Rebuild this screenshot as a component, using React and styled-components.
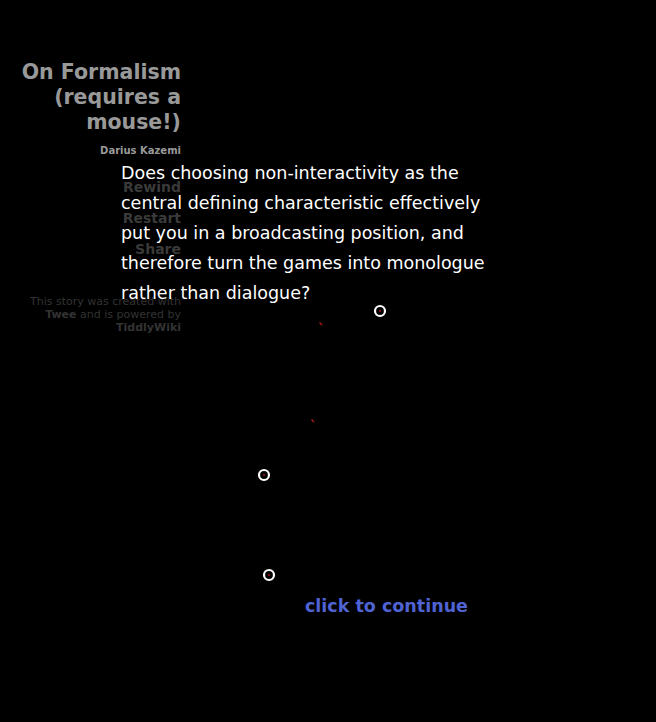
import React from "react";
import styled, { createGlobalStyle } from "styled-components";

const Global = createGlobalStyle`
  html, body { margin: 0; padding: 0; background: #000; }
  body { font-family: "DejaVu Sans", Verdana, sans-serif; }
`;

const Page = styled.div`
  position: relative;
  width: 656px;
  height: 722px;
  background: #000;
  overflow: hidden;
  display: grid;
  grid-template-columns: 121px 60px 1fr;
  grid-template-rows: auto;
  align-items: start;
`;

const Sidebar = styled.aside`
  grid-column: 1 / 3;
  grid-row: 1;
  padding-top: 60px;
  display: flex;
  flex-direction: column;
  align-items: flex-end;
  text-align: right;
`;

const Title = styled.h1`
  margin: 0;
  font-size: 20.5px;
  line-height: 25px;
  font-weight: bold;
  color: #999;
  width: 170px;
`;

const Author = styled.div`
  margin-top: 9px;
  font-size: 10px;
  font-weight: bold;
  color: #999;
  line-height: 13px;
`;

const Menu = styled.ul`
  list-style: none;
  margin: 20px 0 0;
  padding: 0;
  display: flex;
  flex-direction: column;
  align-items: flex-end;
  gap: 11px;
`;

const MenuItem = styled.li`
  font-size: 14px;
  line-height: 20px;
  font-weight: bold;
  color: #3a3a3a;
`;

const Credits = styled.p`
  margin: 36px 0 0;
  font-size: 11px;
  line-height: 13px;
  color: #333;
  width: 170px;
  b { font-weight: bold; }
`;

const Passage = styled.main`
  grid-column: 2 / 4;
  grid-row: 1;
  margin-top: 158px;
  width: 380px;
  position: relative;
  z-index: 1;
`;

const Question = styled.p`
  margin: 0;
  font-size: 17.5px;
  line-height: 30px;
  color: #fff;
`;

const Canvas = styled.div`
  position: relative;
  height: 340px;
`;

const Ring = styled.svg`
  position: absolute;
  width: 14px;
  height: 14px;
`;

const Tick = styled.svg`
  position: absolute;
  width: 4px;
  height: 4px;
`;

const Continue = styled.a`
  position: absolute;
  left: 184px;
  top: 288px;
  font-size: 17.5px;
  font-weight: bold;
  color: #4f63d2;
  text-decoration: none;
  white-space: nowrap;
  cursor: pointer;
`;

const rings = [
  { x: 380, y: 311 },
  { x: 264, y: 475 },
  { x: 269, y: 575 },
];
const ticks = [
  { x: 321, y: 324 },
  { x: 313, y: 421 },
];

const originX = 121;
const originY = 308;

export default function App() {
  return (
    <>
      <Global />
      <Page>
        <Sidebar>
          <Title>On Formalism (requires a mouse!)</Title>
          <Author>Darius Kazemi</Author>
          <Menu>
            <MenuItem>Rewind</MenuItem>
            <MenuItem>Restart</MenuItem>
            <MenuItem>Share</MenuItem>
          </Menu>
          <Credits>
            This story was created with <b>Twee</b> and is powered by <b>TiddlyWiki</b>
          </Credits>
        </Sidebar>
        <Passage>
          <Question>
            Does choosing non-interactivity as the central defining
            characteristic effectively put you in a broadcasting position, and
            therefore turn the games into monologue rather than dialogue?
          </Question>
          <Canvas>
            {rings.map((r, i) => (
              <Ring
                key={i}
                viewBox="0 0 14 14"
                style={{ left: r.x - originX - 7, top: r.y - originY - 7 }}
              >
                <circle cx="7" cy="7" r="5" fill="none" stroke="#fff" strokeWidth="2.2" />
                <circle cx="7" cy="7" r="1" fill="#a01010" />
              </Ring>
            ))}
            {ticks.map((t, i) => (
              <Tick
                key={i}
                viewBox="0 0 4 4"
                style={{ left: t.x - originX - 2, top: t.y - originY - 2 }}
              >
                <line x1="0.5" y1="0.5" x2="3" y2="3" stroke="#c01818" strokeWidth="1.2" />
              </Tick>
            ))}
            <Continue>click to continue</Continue>
          </Canvas>
        </Passage>
      </Page>
    </>
  );
}
